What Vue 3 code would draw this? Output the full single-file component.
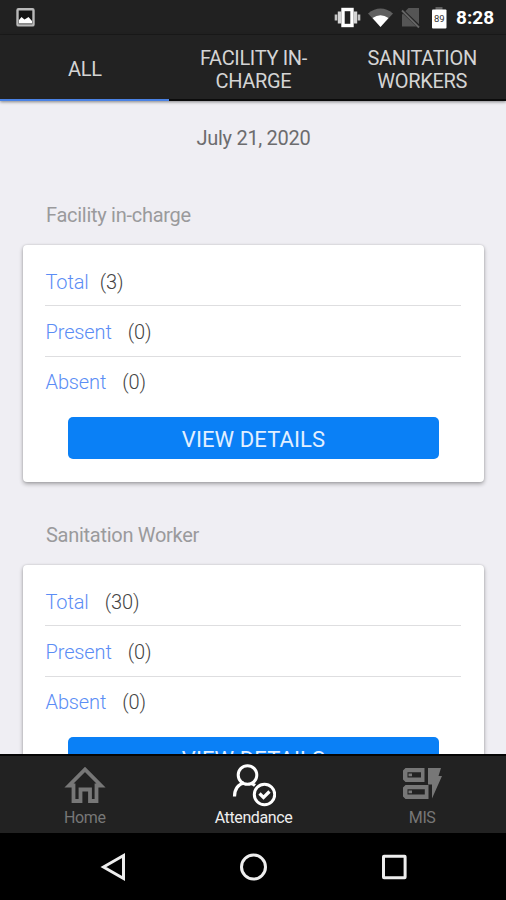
<script setup>
const tabs = [
  { lines: ['ALL'], active: true },
  { lines: ['FACILITY IN-', 'CHARGE'], active: false },
  { lines: ['SANITATION', 'WORKERS'], active: false },
]
const groups = [
  {
    title: 'Facility in-charge',
    rows: [
      { label: 'Total', count: 3, tight: true },
      { label: 'Present', count: 0 },
      { label: 'Absent', count: 0 },
    ],
  },
  {
    title: 'Sanitation Worker',
    rows: [
      { label: 'Total', count: 30 },
      { label: 'Present', count: 0 },
      { label: 'Absent', count: 0 },
    ],
  },
]
</script>

<template>
  <div class="screen">
    <header class="status">
      <svg class="picture" width="19" height="19" viewBox="0 0 19 19">
        <rect x="1.500" y="1.200" width="16" height="16.200" rx="1" fill="#151515" stroke="#b9b9b9" stroke-width="2.400" />
        <path d="M3 15.500V12l2.500-3 3 2.500L11 10l1.500-1 3.500 4v2.500z" fill="#fff" />
      </svg>
      <svg class="indicators" width="120" height="24" viewBox="0 0 120 24">
        <g>
          <rect x="10" y="4.500" width="9" height="16" fill="#222" stroke="#fff" stroke-width="3.400" />
          <path d="M6.500 6.500v12M22.500 6.500v12" stroke="#d5d5d5" stroke-width="3.400" />
          <path d="M3 9.500v6M26 9.500v6" stroke="#c5c5c5" stroke-width="2.600" />
        </g>
        <path d="M35 8.500Q47.500-1.500 60 8.500L47.500 22z" fill="#606060" />
        <path d="M39.500 13Q47.500 7.500 55.500 13L47.500 22z" fill="#fff" />
        <path d="M75.500 3H86v18.500H69V9.500z" fill="#555" />
        <path d="M67 3.500L87 22.500" stroke="#222" stroke-width="3.400" />
        <path d="M69 5.500L86 22.500" stroke="#666" stroke-width="1.800" />
        <path d="M102.500 2h7v3h-7z" fill="#606060" />
        <rect x="99" y="4.500" width="14.500" height="19" rx="1" fill="#fff" />
        <text x="106.300" y="16.500" text-anchor="middle" font-size="9.500" fill="#333">89</text>
      </svg>
      <span class="clock">8:28</span>
    </header>

    <nav class="tabs">
      <div v-for="tab in tabs" :key="tab.lines[0]" class="tab" :class="{ active: tab.active }">
        <span v-for="line in tab.lines" :key="line">{{ line }}</span>
      </div>
    </nav>

    <main class="content">
      <div class="date">July 21, 2020</div>
      <section v-for="group in groups" :key="group.title" class="group">
        <h2>{{ group.title }}</h2>
        <div class="card">
          <div v-for="row in group.rows" :key="row.label" class="row" :class="{ tight: row.tight }">
            <span class="label">{{ row.label }}</span>
            <span class="count">({{ row.count }})</span>
          </div>
          <button class="details">VIEW DETAILS</button>
        </div>
      </section>
    </main>

    <nav class="bottom">
      <div class="item">
        <svg class="home" width="42" height="40" viewBox="0 0 42 40" fill="none" stroke="#777" stroke-width="3.800">
          <path d="M5 20.500L21 4.500l16 16h-4.500V36h-6.500V24.500h-9.500V36H9.500V20.500z" />
        </svg>
        <span>Home</span>
      </div>
      <div class="item current">
        <svg class="person" width="46" height="44" viewBox="0 0 46 44" fill="none" stroke="#fff" stroke-width="3">
          <circle cx="17.500" cy="12" r="9.300" />
          <path d="M4.500 33.500c0-7.500 4-12.500 9.500-13.500M20.500 20.500c1.800.2 3 .8 4.500 2" stroke-width="3.200" />
          <circle cx="34.500" cy="31.500" r="10.200" />
          <path d="M29.500 30.500l4 4 6-6" stroke-width="3.200" />
        </svg>
        <span>Attendance</span>
      </div>
      <div class="item">
        <svg class="mis" width="42" height="38" viewBox="0 0 42 38">
          <path fill="#777" fill-rule="evenodd" d="M4.500 3H23.500v14H4.500L2 14.500V5.500zM6.500 7.300v5.200H20V7.300zM4.500 20H27.500v14H4.500L2 31.500v-9zM6.500 24.300v5.200H23.800v-5.200z" />
          <path fill="#777" d="M7.500 8.600h3.500v2.600h-3.500zM7.500 25.600h3.500v2.600h-3.500zM27 3h13l-2.500 8h3.500L31 33.500V19.500h-4z" />
        </svg>
        <span>MIS</span>
      </div>
    </nav>

    <footer class="system">
      <svg width="28" height="32" viewBox="0 0 28 32"><path d="M3.500 16L23.500 4.500v23z" /></svg>
      <svg width="28" height="32" viewBox="0 0 28 32"><circle cx="13.500" cy="16" r="12" /></svg>
      <svg width="28" height="32" viewBox="0 0 28 32"><rect x="3.500" y="5.200" width="21.600" height="21.600" rx=".5" /></svg>
    </footer>
  </div>
</template>

<style>
body {
  margin: 0;
}
</style>

<style scoped>
.screen {
  width: 506px;
  height: 900px;
  display: flex;
  flex-direction: column;
  overflow: hidden;
  background: #efeef3;
  font-family: Roboto, "Liberation Sans", sans-serif;
}
.status {
  height: 35px;
  box-sizing: border-box;
  flex: none;
  display: flex;
  align-items: center;
  padding: 0 11px 0 16px;
  background: #212121;
  border-bottom: 1px solid #1b1b1b;
}
.picture {
  margin-right: auto;
}
.indicators {
  margin-right: 3px;
}
.clock {
  width: 39px;
  padding-top: 1px;
  font-size: 19px;
  font-weight: 700;
  color: #fff;
  white-space: nowrap;
}
.tabs {
  position: relative;
  z-index: 1;
  height: 66px;
  margin-bottom: 1px;
  flex: none;
  display: grid;
  grid-template-columns: repeat(3, 1fr);
  background: #222;
  box-shadow: 0 1px 3px rgba(0, 0, 0, 0.45);
}
.tab {
  box-sizing: border-box;
  display: flex;
  flex-direction: column;
  align-items: center;
  justify-content: center;
  border-bottom: 2px solid #0b0b0b;
  padding: 5px 0 0 1px;
  font-size: 20px;
  line-height: 23px;
  letter-spacing: -0.33px;
  color: #d4d4d4;
}
.tab.active {
  border-bottom-color: #4a82e4;
}
.content {
  flex: 1;
  min-height: 0;
  overflow: hidden;
  padding: 0 22px 0 23px;
}
.date {
  padding: 24px 0 0;
  height: 66px;
  line-height: 24px;
  font-size: 20px;
  letter-spacing: -0.3px;
  text-align: center;
  color: #6c6c6e;
}
.group {
  margin-bottom: 30px;
}
.group h2 {
  margin: 0;
  padding: 11px 23px 18px;
  font-size: 20px;
  line-height: 24px;
  font-weight: 400;
  letter-spacing: -0.28px;
  color: #9a9a9c;
}
.card {
  height: 237px;
  box-sizing: border-box;
  padding: 11px 23px 0 22px;
  background: #fff;
  border-radius: 4px;
  box-shadow: 0 2px 4px rgba(0, 0, 0, 0.32), 0 0 2px rgba(0, 0, 0, 0.15);
}
.row {
  display: flex;
  align-items: center;
  gap: 16px;
  height: 50.300px;
  box-sizing: border-box;
  padding-top: 3px;
  border-bottom: 1.500px solid #dedee0;
  font-size: 20px;
  font-weight: 300;
  letter-spacing: -0.12px;
}
.row.tight {
  gap: 11px;
}
.row:nth-child(3) {
  padding-top: 1px;
  border-bottom-color: transparent;
}
.label {
  padding-left: 0.500px;
  color: #5b8df5;
}
.count {
  color: #444;
}
.details {
  display: block;
  width: 371px;
  height: 42px;
  margin: 10px auto 0;
  padding: 3px 0 0 1px;
  border: 0;
  border-radius: 5px;
  background: #0a80f6;
  color: #e2efff;
  font-family: inherit;
  font-size: 22px;
  letter-spacing: 0.1px;
}
.bottom {
  height: 79px;
  box-sizing: border-box;
  flex: none;
  display: grid;
  grid-template-columns: repeat(3, 1fr);
  background: #222;
  border-top: 2px solid #050505;
}
.item {
  display: flex;
  flex-direction: column;
  align-items: center;
  justify-content: flex-end;
  padding: 0 0 5px 1px;
  font-size: 16px;
  line-height: 20px;
  letter-spacing: -0.4px;
  color: #777;
}
.home {
  margin-bottom: 3px;
}
.person {
  margin-bottom: 1px;
}
.mis {
  margin-bottom: 5px;
}
.current {
  color: #eee;
}
.system {
  height: 67px;
  flex: none;
  display: flex;
  align-items: center;
  justify-content: center;
  gap: 112px;
  padding-left: 1px;
  background: #000;
}
.system svg {
  fill: none;
  stroke: #eee;
  stroke-width: 3px;
}
</style>
